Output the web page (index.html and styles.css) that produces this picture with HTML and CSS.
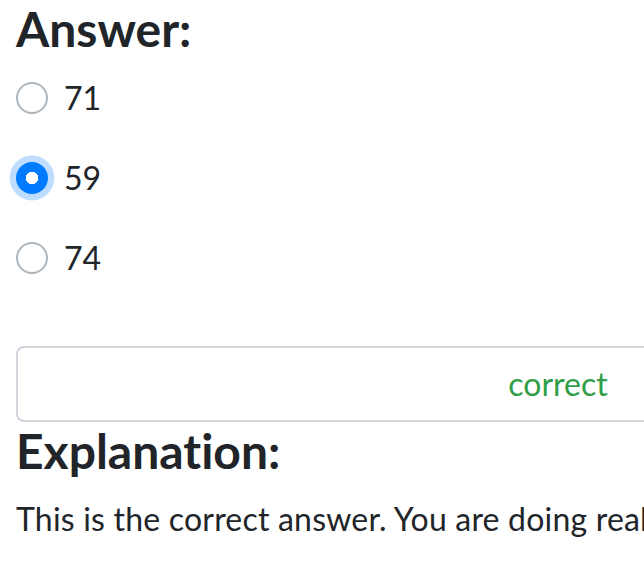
FILE: index.html
```html
<!DOCTYPE html>
<html lang="en">
<head>
<meta charset="utf-8">
<title>Answer</title>
<link rel="stylesheet" href="styles.css">
</head>
<body>
<main class="page">
  <h4 class="heading">Answer:</h4>
  <div class="options">
    <label class="option"><input class="radio" type="radio" name="answer" value="71"><span class="option-text">71</span></label>
    <label class="option"><input class="radio radio-focus" type="radio" name="answer" value="59" checked><span class="option-text">59</span></label>
    <label class="option"><input class="radio" type="radio" name="answer" value="74"><span class="option-text">74</span></label>
  </div>
  <div class="result">correct</div>
  <h4 class="heading">Explanation:</h4>
  <p class="explanation">This is the correct answer. You are doing really well!</p>
</main>
</body>
</html>
```
FILE: styles.css
```css
html, body {
  margin: 0;
  padding: 0;
  overflow: hidden;
  background: #fff;
}
body {
  font-family: "Lato", "Open Sans", sans-serif;
  font-size: 32px;
  line-height: 1.5;
  color: #212529;
  font-variant-ligatures: no-common-ligatures;
}
.page {
  display: flex;
  flex-direction: column;
  align-items: flex-start;
  padding-left: 16px;
  width: 1100px;
}
.heading {
  font-size: 48px;
  font-weight: 700;
  line-height: 1.2;
  margin: 0 0 16px;
}
.options {
  display: flex;
  flex-direction: column;
  gap: 32px;
  margin-bottom: 64px;
}
.option {
  display: flex;
  align-items: flex-start;
  gap: 16px;
  min-height: 48px;
}
.radio {
  appearance: none;
  -webkit-appearance: none;
  box-sizing: border-box;
  width: 32px;
  height: 32px;
  margin: 8px 0 0;
  border: 2px solid #adb5bd;
  border-radius: 50%;
  background: #fff;
  flex: none;
}
.radio:checked {
  background: #007bff radial-gradient(circle, #fff 0 6px, transparent 6.5px);
  border-color: #007bff;
}
.radio-focus {
  box-shadow: 0 0 0 6.4px rgba(0, 123, 255, 0.25);
  outline: none;
}
.result {
  box-sizing: border-box;
  width: 1084px;
  height: 76px;
  padding: 12px 24px;
  border: 2px solid #ced4da;
  border-radius: 8px;
  color: #2f9e47;
  text-align: center;
}
.explanation {
  margin: 0;
  white-space: nowrap;
  letter-spacing: 0.2px;
}
```
